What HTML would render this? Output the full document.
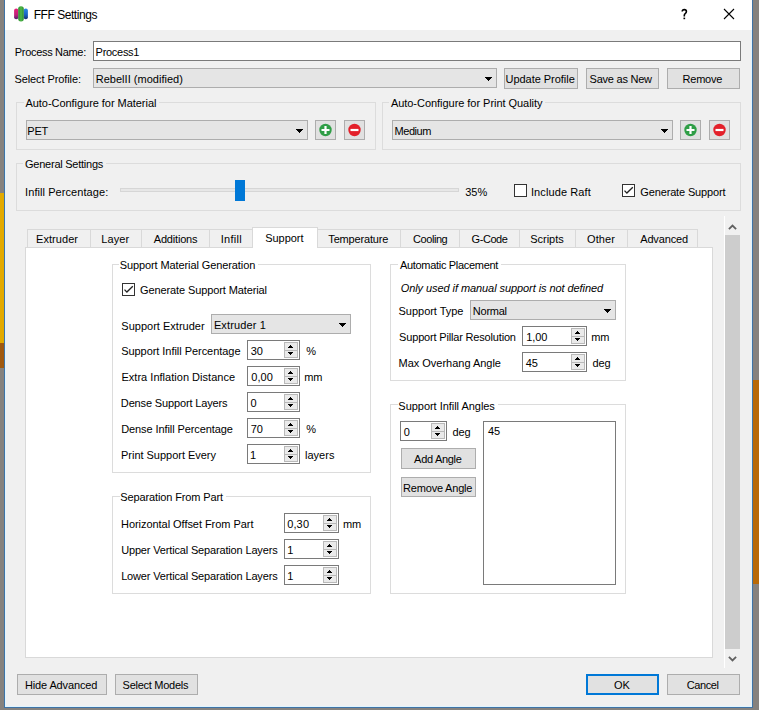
<!DOCTYPE html>
<html><head><meta charset="utf-8"><style>
*{margin:0;padding:0;box-sizing:border-box}
html,body{width:759px;height:710px;overflow:hidden;background:#86827e;position:relative}
body>div,body>svg{position:absolute}
.t{position:absolute;font-family:"Liberation Sans",sans-serif;font-size:11px;line-height:13px;white-space:nowrap;color:#000}
.grp{border:1px solid #dcdcdc}
.combo{background:#e5e5e5;border:1px solid #adadad}
.btn{background:#e1e1e1;border:1px solid #adadad}
.btnok{background:#e1e1e1;border:2px solid #0078d7}
.inp{background:#fff;border:1px solid #7a7a7a}
.sb{background:#eaeaea;border:1px solid #b9b9b9}
.chk{background:#fff;border:1px solid #333}
.arrow{width:0;height:0;border-left:4px solid transparent;border-right:4px solid transparent;border-top:4px solid #000}
.up{width:0;height:0;border-left:3px solid transparent;border-right:3px solid transparent;border-bottom:3px solid #000}
.dn{width:0;height:0;border-left:3px solid transparent;border-right:3px solid transparent;border-top:3px solid #000}
.tab{background:#f0f0f0;border:1px solid #d9d9d9;border-bottom:none}
</style></head><body>

<div class="" style="left:0px;top:193px;width:4px;height:150px;background:#e2aa00"></div>
<div class="" style="left:0px;top:343px;width:4px;height:25px;background:#a05a10"></div>
<div class="" style="left:753px;top:380px;width:6px;height:204px;background:#b86a08"></div>
<div class="" style="left:4px;top:0px;width:749px;height:708px;background:#3f73a6"></div>
<div class="" style="left:5px;top:0px;width:747px;height:707px;background:#dff4ff"></div>
<div class="" style="left:6px;top:0px;width:745px;height:706px;background:#f0f0f0"></div>
<div class="" style="left:5px;top:0px;width:747px;height:30px;background:#ffffff"></div>
<svg style="left:13px;top:5px" width="17" height="17" viewBox="0 0 17 17"><defs><linearGradient id="gp" x1="0" y1="0" x2="0" y2="1"><stop offset="0" stop-color="#e8207a"/><stop offset="0.6" stop-color="#c0207a"/><stop offset="1" stop-color="#502070"/></linearGradient><linearGradient id="gb" x1="0" y1="0" x2="0" y2="1"><stop offset="0" stop-color="#2a8ae8"/><stop offset="0.6" stop-color="#1a60c0"/><stop offset="1" stop-color="#183070"/></linearGradient><linearGradient id="gg" x1="0" y1="0" x2="1" y2="0"><stop offset="0" stop-color="#2a8a30"/><stop offset="0.5" stop-color="#50b848"/><stop offset="1" stop-color="#2a8a30"/></linearGradient></defs><rect x="1.1" y="3.5" width="4.2" height="10.7" rx="2" fill="url(#gp)"/><rect x="10.7" y="3.5" width="4.2" height="10.7" rx="2" fill="url(#gb)"/><rect x="5.2" y="1.2" width="5.6" height="15.2" rx="2.6" fill="url(#gg)"/></svg>
<div class="t " style="left:33.7px;top:9px;letter-spacing:-0.45px;font-size:12px;">FFF Settings</div>
<svg style="left:680px;top:8px" width="10" height="13" viewBox="0 0 10 13"><path d="M2.2 3.6 Q2.2 1.6 4.3 1.6 Q6.4 1.6 6.4 3.6 Q6.4 4.9 5.2 5.7 Q4.3 6.3 4.3 7.5 V8.4" fill="none" stroke="#000" stroke-width="1.6"/><rect x="3.45" y="9.6" width="1.7" height="1.6" fill="#000"/></svg>
<svg style="left:723px;top:8px" width="12" height="12" viewBox="0 0 12 12"><path d="M1 1 L11 11 M11 1 L1 11" stroke="#000" stroke-width="1.1"/></svg>
<div class="t " style="left:14.8px;top:46px;letter-spacing:-0.317px;">Process Name:</div>
<div class="inp" style="left:93px;top:41px;width:648px;height:20px;"></div>
<div class="t " style="left:95.6px;top:46px;letter-spacing:-0.286px;">Process1</div>
<div class="t " style="left:14.5px;top:73px;letter-spacing:-0.1px;">Select Profile:</div>
<div class="combo" style="left:93px;top:68px;width:404px;height:20px;"></div>
<div style="left:485px;top:77px;width:7px;height:1px;background:#000"></div>
<div style="left:486px;top:78px;width:5px;height:1px;background:#000"></div>
<div style="left:487px;top:79px;width:3px;height:1px;background:#000"></div>
<div style="left:488px;top:80px;width:1px;height:1px;background:#000"></div>
<div class="t " style="left:95.75px;top:73px;letter-spacing:0.018px;">RebelII (modified)</div>
<div class="btn" style="left:504px;top:68px;width:74px;height:21px;"></div>
<div class="t " style="left:505.55px;top:73px;letter-spacing:-0.038px;">Update Profile</div>
<div class="btn" style="left:586px;top:68px;width:73px;height:21px;"></div>
<div class="t " style="left:589.6px;top:73px;letter-spacing:-0.24px;">Save as New</div>
<div class="btn" style="left:667px;top:68px;width:73px;height:21px;"></div>
<div class="t " style="left:682.6px;top:73px;letter-spacing:-0.24px;">Remove</div>
<div class="grp" style="left:16px;top:102px;width:360px;height:48px;"></div>
<div class="" style="left:24px;top:102px;width:135px;height:1px;background:#f0f0f0"></div>
<div class="t " style="left:25.45px;top:97px;letter-spacing:-0.042px;">Auto-Configure for Material</div>
<div class="combo" style="left:26px;top:120px;width:282px;height:20px;"></div>
<div style="left:296px;top:129px;width:7px;height:1px;background:#000"></div>
<div style="left:297px;top:130px;width:5px;height:1px;background:#000"></div>
<div style="left:298px;top:131px;width:3px;height:1px;background:#000"></div>
<div style="left:299px;top:132px;width:1px;height:1px;background:#000"></div>
<div class="t " style="left:27.25px;top:125px;letter-spacing:-0.15px;">PET</div>
<div class="btn" style="left:315px;top:120px;width:21px;height:20px;"></div>
<div class="btn" style="left:344px;top:120px;width:21px;height:20px;"></div>
<svg style="left:315px;top:120px" width="21" height="20" viewBox="0 0 21 20"><circle cx="10.5" cy="10" r="6.2" fill="#2f9e46"/><path d="M10.5 6 V14 M6.5 10 H14.5" stroke="#fff" stroke-width="2.2"/></svg>
<svg style="left:344px;top:120px" width="21" height="20" viewBox="0 0 21 20"><circle cx="10.5" cy="10" r="6.2" fill="#e3202a"/><path d="M6.5 10 H14.5" stroke="#fff" stroke-width="2.2"/></svg>
<div class="grp" style="left:382px;top:102px;width:359px;height:48px;"></div>
<div class="" style="left:389px;top:102px;width:156px;height:1px;background:#f0f0f0"></div>
<div class="t " style="left:390.9px;top:97px;letter-spacing:-0.039px;">Auto-Configure for Print Quality</div>
<div class="combo" style="left:392px;top:120px;width:281px;height:20px;"></div>
<div style="left:661px;top:129px;width:7px;height:1px;background:#000"></div>
<div style="left:662px;top:130px;width:5px;height:1px;background:#000"></div>
<div style="left:663px;top:131px;width:3px;height:1px;background:#000"></div>
<div style="left:664px;top:132px;width:1px;height:1px;background:#000"></div>
<div class="t " style="left:394.5px;top:125px;letter-spacing:-0.45px;">Medium</div>
<div class="btn" style="left:680px;top:120px;width:21px;height:20px;"></div>
<div class="btn" style="left:709px;top:120px;width:21px;height:20px;"></div>
<svg style="left:680px;top:120px" width="21" height="20" viewBox="0 0 21 20"><circle cx="10.5" cy="10" r="6.2" fill="#2f9e46"/><path d="M10.5 6 V14 M6.5 10 H14.5" stroke="#fff" stroke-width="2.2"/></svg>
<svg style="left:709px;top:120px" width="21" height="20" viewBox="0 0 21 20"><circle cx="10.5" cy="10" r="6.2" fill="#e3202a"/><path d="M6.5 10 H14.5" stroke="#fff" stroke-width="2.2"/></svg>
<div class="grp" style="left:16px;top:163px;width:725px;height:48px;"></div>
<div class="" style="left:23px;top:163px;width:83px;height:1px;background:#f0f0f0"></div>
<div class="t " style="left:25.05px;top:158px;letter-spacing:-0.247px;">General Settings</div>
<div class="t " style="left:25.1px;top:186px;letter-spacing:0.071px;">Infill Percentage:</div>
<div class="" style="left:120px;top:188px;width:339px;height:4px;background:#e7e7e7;border:1px solid #d6d6d6"></div>
<div class="" style="left:235px;top:180px;width:10px;height:21px;background:#0078d7"></div>
<div class="t " style="left:465.2px;top:186px;">35%</div>
<div class="chk" style="left:514px;top:184px;width:13px;height:13px;"></div>
<div class="t " style="left:530.9px;top:186px;letter-spacing:0.109px;">Include Raft</div>
<div class="chk" style="left:622px;top:184px;width:13px;height:13px;"><svg width="11" height="11" style="position:absolute;left:0;top:0"><path d="M1.5 5.6 L3.9 8.1 L9.8 2.2" fill="none" stroke="#222" stroke-width="1.35"/></svg></div>
<div class="t " style="left:640.35px;top:186px;letter-spacing:-0.153px;">Generate Support</div>
<div class="" style="left:724px;top:216px;width:1px;height:452px;background:#fff"></div>
<div class="" style="left:725px;top:235px;width:15px;height:414px;background:#cdcdcd"></div>
<svg style="left:727px;top:222px" width="11" height="10" viewBox="0 0 11 10"><path d="M1.9 7.2 L5.5 3.6 L9.1 7.2" fill="none" stroke="#606060" stroke-width="1.8"/></svg>
<svg style="left:727px;top:654px" width="11" height="10" viewBox="0 0 11 10"><path d="M1.9 2.8 L5.5 6.4 L9.1 2.8" fill="none" stroke="#606060" stroke-width="1.8"/></svg>
<div class="" style="left:25px;top:247px;width:688px;height:411px;background:#fff;border:1px solid #d9d9d9"></div>
<div class="tab" style="left:27px;top:229px;width:64px;height:18px;"></div>
<div class="t " style="left:36.0px;top:233px;letter-spacing:0.057px;">Extruder</div>
<div class="tab" style="left:90px;top:229px;width:52px;height:18px;"></div>
<div class="t " style="left:101.35px;top:233px;letter-spacing:0.075px;">Layer</div>
<div class="tab" style="left:141px;top:229px;width:69px;height:18px;"></div>
<div class="t " style="left:153.75px;top:233px;letter-spacing:-0.188px;">Additions</div>
<div class="tab" style="left:209px;top:229px;width:45px;height:18px;"></div>
<div class="t " style="left:220.65px;top:233px;letter-spacing:0.3px;">Infill</div>
<div class="tab" style="left:317px;top:229px;width:84px;height:18px;"></div>
<div class="t " style="left:328.3px;top:233px;letter-spacing:-0.16px;">Temperature</div>
<div class="tab" style="left:400px;top:229px;width:60px;height:18px;"></div>
<div class="t " style="left:413.1px;top:233px;letter-spacing:-0.45px;">Cooling</div>
<div class="tab" style="left:459px;top:229px;width:61px;height:18px;"></div>
<div class="t " style="left:471.6px;top:233px;letter-spacing:-0.45px;">G-Code</div>
<div class="tab" style="left:519px;top:229px;width:57px;height:18px;"></div>
<div class="t " style="left:530.3px;top:233px;letter-spacing:-0.033px;">Scripts</div>
<div class="tab" style="left:575px;top:229px;width:53px;height:18px;"></div>
<div class="t " style="left:587.1px;top:233px;letter-spacing:0.05px;">Other</div>
<div class="tab" style="left:627px;top:229px;width:71px;height:18px;"></div>
<div class="t " style="left:640.2px;top:233px;letter-spacing:-0.143px;">Advanced</div>
<div class="" style="left:252px;top:227px;width:66px;height:21px;background:#fff;border:1px solid #d9d9d9;border-bottom:none"></div>
<div class="t " style="left:265.25px;top:232px;letter-spacing:-0.05px;">Support</div>
<div class="grp" style="left:112px;top:264px;width:259px;height:209px;"></div>
<div class="" style="left:119px;top:264px;width:139px;height:1px;background:#fff"></div>
<div class="t " style="left:119.7px;top:259px;letter-spacing:-0.1px;">Support Material Generation</div>
<div class="chk" style="left:122px;top:283px;width:13px;height:13px;"><svg width="11" height="11" style="position:absolute;left:0;top:0"><path d="M1.5 5.6 L3.9 8.1 L9.8 2.2" fill="none" stroke="#222" stroke-width="1.35"/></svg></div>
<div class="t " style="left:139.95px;top:284px;letter-spacing:-0.104px;">Generate Support Material</div>
<div class="t " style="left:121.3px;top:320px;letter-spacing:0.013px;">Support Extruder</div>
<div class="combo" style="left:211px;top:314px;width:140px;height:20px;"></div>
<div style="left:339px;top:323px;width:7px;height:1px;background:#000"></div>
<div style="left:340px;top:324px;width:5px;height:1px;background:#000"></div>
<div style="left:341px;top:325px;width:3px;height:1px;background:#000"></div>
<div style="left:342px;top:326px;width:1px;height:1px;background:#000"></div>
<div class="t " style="left:213.9px;top:319px;letter-spacing:0.133px;">Extruder 1</div>
<div class="t " style="left:121.15px;top:345px;letter-spacing:-0.046px;">Support Infill Percentage</div>
<div class="inp" style="left:247px;top:340px;width:53px;height:20px;"></div>
<div class="sb" style="left:284px;top:342px;width:14px;height:9px"></div>
<div class="sb" style="left:284px;top:350px;width:14px;height:8px"></div>
<div style="left:290px;top:345px;width:1px;height:1px;background:#000"></div>
<div style="left:289px;top:346px;width:3px;height:1px;background:#000"></div>
<div style="left:288px;top:347px;width:5px;height:1px;background:#000"></div>
<div style="left:288px;top:352px;width:5px;height:1px;background:#000"></div>
<div style="left:289px;top:353px;width:3px;height:1px;background:#000"></div>
<div style="left:290px;top:354px;width:1px;height:1px;background:#000"></div>
<div class="t " style="left:250.7px;top:345px;letter-spacing:-0.15px;">30</div>
<div class="t " style="left:306.25px;top:345px;">%</div>
<div class="t " style="left:121.45px;top:371px;letter-spacing:0.022px;">Extra Inflation Distance</div>
<div class="inp" style="left:247px;top:366px;width:53px;height:20px;"></div>
<div class="sb" style="left:284px;top:368px;width:14px;height:9px"></div>
<div class="sb" style="left:284px;top:376px;width:14px;height:8px"></div>
<div style="left:290px;top:371px;width:1px;height:1px;background:#000"></div>
<div style="left:289px;top:372px;width:3px;height:1px;background:#000"></div>
<div style="left:288px;top:373px;width:5px;height:1px;background:#000"></div>
<div style="left:288px;top:378px;width:5px;height:1px;background:#000"></div>
<div style="left:289px;top:379px;width:3px;height:1px;background:#000"></div>
<div style="left:290px;top:380px;width:1px;height:1px;background:#000"></div>
<div class="t " style="left:251.3px;top:371px;letter-spacing:0.067px;">0,00</div>
<div class="t " style="left:304.15px;top:371px;letter-spacing:-0.15px;">mm</div>
<div class="t " style="left:120.85px;top:397px;letter-spacing:-0.142px;">Dense Support Layers</div>
<div class="inp" style="left:247px;top:392px;width:53px;height:20px;"></div>
<div class="sb" style="left:284px;top:394px;width:14px;height:9px"></div>
<div class="sb" style="left:284px;top:402px;width:14px;height:8px"></div>
<div style="left:290px;top:397px;width:1px;height:1px;background:#000"></div>
<div style="left:289px;top:398px;width:3px;height:1px;background:#000"></div>
<div style="left:288px;top:399px;width:5px;height:1px;background:#000"></div>
<div style="left:288px;top:404px;width:5px;height:1px;background:#000"></div>
<div style="left:289px;top:405px;width:3px;height:1px;background:#000"></div>
<div style="left:290px;top:406px;width:1px;height:1px;background:#000"></div>
<div class="t " style="left:250.55px;top:397px;">0</div>
<div class="t " style="left:121.2px;top:423px;letter-spacing:-0.091px;">Dense Infill Percentage</div>
<div class="inp" style="left:247px;top:418px;width:53px;height:20px;"></div>
<div class="sb" style="left:284px;top:420px;width:14px;height:9px"></div>
<div class="sb" style="left:284px;top:428px;width:14px;height:8px"></div>
<div style="left:290px;top:423px;width:1px;height:1px;background:#000"></div>
<div style="left:289px;top:424px;width:3px;height:1px;background:#000"></div>
<div style="left:288px;top:425px;width:5px;height:1px;background:#000"></div>
<div style="left:288px;top:430px;width:5px;height:1px;background:#000"></div>
<div style="left:289px;top:431px;width:3px;height:1px;background:#000"></div>
<div style="left:290px;top:432px;width:1px;height:1px;background:#000"></div>
<div class="t " style="left:250.7px;top:423px;letter-spacing:-0.15px;">70</div>
<div class="t " style="left:306.25px;top:423px;">%</div>
<div class="t " style="left:121.0px;top:449px;letter-spacing:-0.022px;">Print Support Every</div>
<div class="inp" style="left:247px;top:444px;width:53px;height:20px;"></div>
<div class="sb" style="left:284px;top:446px;width:14px;height:9px"></div>
<div class="sb" style="left:284px;top:454px;width:14px;height:8px"></div>
<div style="left:290px;top:449px;width:1px;height:1px;background:#000"></div>
<div style="left:289px;top:450px;width:3px;height:1px;background:#000"></div>
<div style="left:288px;top:451px;width:5px;height:1px;background:#000"></div>
<div style="left:288px;top:456px;width:5px;height:1px;background:#000"></div>
<div style="left:289px;top:457px;width:3px;height:1px;background:#000"></div>
<div style="left:290px;top:458px;width:1px;height:1px;background:#000"></div>
<div class="t " style="left:250.05px;top:449px;">1</div>
<div class="t " style="left:304.95px;top:449px;letter-spacing:0.02px;">layers</div>
<div class="grp" style="left:112px;top:496px;width:259px;height:98px;"></div>
<div class="" style="left:120px;top:496px;width:106px;height:1px;background:#fff"></div>
<div class="t " style="left:120.25px;top:491px;letter-spacing:-0.121px;">Separation From Part</div>
<div class="t " style="left:121.0px;top:518px;letter-spacing:-0.046px;">Horizontal Offset From Part</div>
<div class="inp" style="left:284px;top:513px;width:55px;height:20px;"></div>
<div class="sb" style="left:323px;top:515px;width:14px;height:9px"></div>
<div class="sb" style="left:323px;top:523px;width:14px;height:8px"></div>
<div style="left:329px;top:518px;width:1px;height:1px;background:#000"></div>
<div style="left:328px;top:519px;width:3px;height:1px;background:#000"></div>
<div style="left:327px;top:520px;width:5px;height:1px;background:#000"></div>
<div style="left:327px;top:525px;width:5px;height:1px;background:#000"></div>
<div style="left:328px;top:526px;width:3px;height:1px;background:#000"></div>
<div style="left:329px;top:527px;width:1px;height:1px;background:#000"></div>
<div class="t " style="left:287.15px;top:518px;letter-spacing:0.15px;">0,30</div>
<div class="t " style="left:342.9px;top:518px;letter-spacing:-0.15px;">mm</div>
<div class="t " style="left:121.15px;top:544px;letter-spacing:-0.158px;">Upper Vertical Separation Layers</div>
<div class="inp" style="left:284px;top:539px;width:55px;height:20px;"></div>
<div class="sb" style="left:323px;top:541px;width:14px;height:9px"></div>
<div class="sb" style="left:323px;top:549px;width:14px;height:8px"></div>
<div style="left:329px;top:544px;width:1px;height:1px;background:#000"></div>
<div style="left:328px;top:545px;width:3px;height:1px;background:#000"></div>
<div style="left:327px;top:546px;width:5px;height:1px;background:#000"></div>
<div style="left:327px;top:551px;width:5px;height:1px;background:#000"></div>
<div style="left:328px;top:552px;width:3px;height:1px;background:#000"></div>
<div style="left:329px;top:553px;width:1px;height:1px;background:#000"></div>
<div class="t " style="left:287.2px;top:544px;">1</div>
<div class="t " style="left:121.15px;top:570px;letter-spacing:-0.158px;">Lower Vertical Separation Layers</div>
<div class="inp" style="left:284px;top:565px;width:55px;height:20px;"></div>
<div class="sb" style="left:323px;top:567px;width:14px;height:9px"></div>
<div class="sb" style="left:323px;top:575px;width:14px;height:8px"></div>
<div style="left:329px;top:570px;width:1px;height:1px;background:#000"></div>
<div style="left:328px;top:571px;width:3px;height:1px;background:#000"></div>
<div style="left:327px;top:572px;width:5px;height:1px;background:#000"></div>
<div style="left:327px;top:577px;width:5px;height:1px;background:#000"></div>
<div style="left:328px;top:578px;width:3px;height:1px;background:#000"></div>
<div style="left:329px;top:579px;width:1px;height:1px;background:#000"></div>
<div class="t " style="left:287.2px;top:570px;">1</div>
<div class="grp" style="left:390px;top:264px;width:236px;height:117px;"></div>
<div class="" style="left:398px;top:264px;width:103px;height:1px;background:#fff"></div>
<div class="t " style="left:399.95px;top:259px;letter-spacing:-0.306px;">Automatic Placement</div>
<div class="t " style="left:400.7px;top:282px;letter-spacing:-0.073px;"><i>Only used if manual support is not defined</i></div>
<div class="t " style="left:398.55px;top:305px;letter-spacing:-0.027px;">Support Type</div>
<div class="combo" style="left:470px;top:300px;width:146px;height:20px;"></div>
<div style="left:604px;top:309px;width:7px;height:1px;background:#000"></div>
<div style="left:605px;top:310px;width:5px;height:1px;background:#000"></div>
<div style="left:606px;top:311px;width:3px;height:1px;background:#000"></div>
<div style="left:607px;top:312px;width:1px;height:1px;background:#000"></div>
<div class="t " style="left:472.85px;top:305px;letter-spacing:-0.26px;">Normal</div>
<div class="t " style="left:399.1px;top:331px;letter-spacing:-0.175px;">Support Pillar Resolution</div>
<div class="inp" style="left:522px;top:326px;width:65px;height:20px;"></div>
<div class="sb" style="left:571px;top:328px;width:14px;height:9px"></div>
<div class="sb" style="left:571px;top:336px;width:14px;height:8px"></div>
<div style="left:577px;top:331px;width:1px;height:1px;background:#000"></div>
<div style="left:576px;top:332px;width:3px;height:1px;background:#000"></div>
<div style="left:575px;top:333px;width:5px;height:1px;background:#000"></div>
<div style="left:575px;top:338px;width:5px;height:1px;background:#000"></div>
<div style="left:576px;top:339px;width:3px;height:1px;background:#000"></div>
<div style="left:577px;top:340px;width:1px;height:1px;background:#000"></div>
<div class="t " style="left:526.3px;top:331px;letter-spacing:-0.133px;">1,00</div>
<div class="t " style="left:591.3px;top:331px;letter-spacing:-0.15px;">mm</div>
<div class="t " style="left:398.55px;top:357px;letter-spacing:-0.018px;">Max Overhang Angle</div>
<div class="inp" style="left:522px;top:352px;width:65px;height:20px;"></div>
<div class="sb" style="left:571px;top:354px;width:14px;height:9px"></div>
<div class="sb" style="left:571px;top:362px;width:14px;height:8px"></div>
<div style="left:577px;top:357px;width:1px;height:1px;background:#000"></div>
<div style="left:576px;top:358px;width:3px;height:1px;background:#000"></div>
<div style="left:575px;top:359px;width:5px;height:1px;background:#000"></div>
<div style="left:575px;top:364px;width:5px;height:1px;background:#000"></div>
<div style="left:576px;top:365px;width:3px;height:1px;background:#000"></div>
<div style="left:577px;top:366px;width:1px;height:1px;background:#000"></div>
<div class="t " style="left:525.85px;top:357px;letter-spacing:-0.15px;">45</div>
<div class="t " style="left:592.6px;top:357px;letter-spacing:-0.15px;">deg</div>
<div class="grp" style="left:390px;top:404px;width:236px;height:190px;"></div>
<div class="" style="left:398px;top:404px;width:100px;height:1px;background:#fff"></div>
<div class="t " style="left:398.35px;top:400px;letter-spacing:-0.035px;">Support Infill Angles</div>
<div class="inp" style="left:400px;top:421px;width:47px;height:20px;"></div>
<div class="sb" style="left:431px;top:423px;width:14px;height:9px"></div>
<div class="sb" style="left:431px;top:431px;width:14px;height:8px"></div>
<div style="left:437px;top:426px;width:1px;height:1px;background:#000"></div>
<div style="left:436px;top:427px;width:3px;height:1px;background:#000"></div>
<div style="left:435px;top:428px;width:5px;height:1px;background:#000"></div>
<div style="left:435px;top:433px;width:5px;height:1px;background:#000"></div>
<div style="left:436px;top:434px;width:3px;height:1px;background:#000"></div>
<div style="left:437px;top:435px;width:1px;height:1px;background:#000"></div>
<div class="t " style="left:403.65px;top:426px;">0</div>
<div class="t " style="left:452.6px;top:426px;letter-spacing:-0.15px;">deg</div>
<div class="btn" style="left:401px;top:448px;width:75px;height:21px;"></div>
<div class="t " style="left:414.1px;top:453px;letter-spacing:-0.3px;">Add Angle</div>
<div class="btn" style="left:401px;top:477px;width:75px;height:20px;"></div>
<div class="t " style="left:403.05px;top:482px;letter-spacing:-0.191px;">Remove Angle</div>
<div class="inp" style="left:483px;top:421px;width:133px;height:164px;"></div>
<div class="t " style="left:488.05px;top:425px;letter-spacing:-0.15px;">45</div>
<div class="btn" style="left:17px;top:674px;width:90px;height:21px;"></div>
<div class="t " style="left:25.0px;top:679px;letter-spacing:-0.133px;">Hide Advanced</div>
<div class="btn" style="left:115px;top:674px;width:83px;height:21px;"></div>
<div class="t " style="left:122.6px;top:679px;letter-spacing:-0.267px;">Select Models</div>
<div class="btnok" style="left:586px;top:674px;width:73px;height:21px;"></div>
<div class="t " style="left:614.1px;top:679px;letter-spacing:-0.15px;">OK</div>
<div class="btn" style="left:667px;top:674px;width:73px;height:21px;"></div>
<div class="t " style="left:686.7px;top:679px;letter-spacing:-0.4px;">Cancel</div>
</body></html>
